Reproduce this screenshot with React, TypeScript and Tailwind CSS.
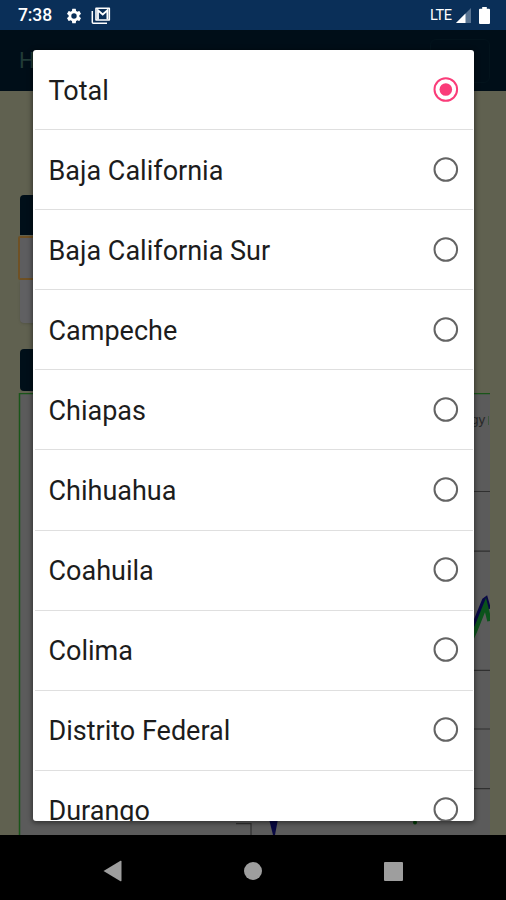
import React from "react";

const states = [
  "Total",
  "Baja California",
  "Baja California Sur",
  "Campeche",
  "Chiapas",
  "Chihuahua",
  "Coahuila",
  "Colima",
  "Distrito Federal",
  "Durango",
];

function StatusBar() {
  return (
    <div className="flex h-[30px] shrink-0 items-center bg-[#0a2f58] pl-[18px] pr-[16.5px] pt-[1px] text-white">
      <span className="w-[49px] whitespace-nowrap text-[17.5px] font-medium leading-[29px] tracking-[-0.1px]">7:38</span>
      <svg className="-ml-[2px] h-[18px] w-[18px]" viewBox="0 0 24 24" fill="#fff">
        <path d="M19.14 12.94c.04-.3.06-.61.06-.94 0-.32-.02-.64-.07-.94l2.03-1.58a.49.49 0 0 0 .12-.61l-1.92-3.32a.49.49 0 0 0-.59-.22l-2.39.96c-.5-.38-1.03-.7-1.62-.94l-.36-2.54a.48.48 0 0 0-.48-.41h-3.84a.47.47 0 0 0-.47.41l-.36 2.54c-.59.24-1.13.57-1.62.94l-2.39-.96a.48.48 0 0 0-.59.22L2.74 8.87a.48.48 0 0 0 .12.61l2.03 1.58c-.05.3-.09.63-.09.94s.02.64.07.94l-2.03 1.58a.49.49 0 0 0-.12.61l1.92 3.32c.12.22.37.29.59.22l2.39-.96c.5.38 1.03.7 1.62.94l.36 2.54c.05.24.24.41.48.41h3.84c.24 0 .44-.17.47-.41l.36-2.54c.59-.24 1.13-.56 1.62-.94l2.39.96c.22.08.47 0 .59-.22l1.92-3.32a.47.47 0 0 0-.12-.61zM12 15.6A3.6 3.6 0 1 1 12 8.4a3.6 3.6 0 0 1 0 7.2z" />
      </svg>
      <svg className="ml-[8px] h-[18px] w-[20px]" viewBox="0 0 20 18" fill="none" stroke="#fff">
        <path d="M1.3 4v11.2q0 1 1 1H16" strokeWidth="1.5" />
        <path d="M5 1.300h13.300v11.700h-13.300z" strokeWidth="1.600" strokeLinejoin="round" />
        <path d="M7 12.500V3.300l4.700 4.200L16.400 3.300v9.200" strokeWidth="1.800" />
      </svg>
      <span className="ml-auto text-[14.5px] leading-[29px] tracking-[-0.4px]">LTE</span>
      <svg className="ml-[4px] h-[15px] w-[15px]" viewBox="0 0 15 15">
        <path d="M15 0v15H0z" fill="#587391" />
        <path d="M9.500 5.500v9.500H0z" fill="#fff" />
      </svg>
      <svg className="ml-[8px] h-[17px] w-[11px]" viewBox="0 0 11 17">
        <path d="M3.2 0h4.6v1.8H10q1 0 1 1V16q0 1-1 1H1q-1 0-1-1V2.800q0-1 1-1h2.200z" fill="#fff" />
      </svg>
    </div>
  );
}

function Chart() {
  return (
    <svg className="mt-[2px] block h-[442px] w-[472px] shrink-0" viewBox="18 393 472 442">
      <rect x="19" y="393" width="471" height="442" fill="#5b5b5b" />
      <path d="M19.500 835V393.500H490" fill="none" stroke="#195519" strokeWidth="1.500" />
      <g stroke="#303030" strokeWidth="1.200">
        <path d="M250 491.500H490M250 551.200H490M250 670.300H490M250 729H490M250 788.700H490" />
        <path d="M236 823.700H251V835" fill="none" />
      </g>
      <text x="471" y="424" fontSize="13.500" fill="#292929" fontFamily="Liberation Sans, sans-serif">gy</text>
      <path d="M488.500 416v9" stroke="#3b563b" />
      <path d="M470 631L475 622L484 600L486 598.500L489 609" fill="none" stroke="#080846" strokeWidth="4" />
      <path d="M470 642L475 631L485.500 605L489.500 621" fill="none" stroke="#0b531b" strokeWidth="4.500" />
      <path d="M269 819h9l-3 16h-2z" fill="#080842" />
      <circle cx="415" cy="822.500" r="2" fill="#053d08" />
    </svg>
  );
}

function Page() {
  return (
    <div className="flex h-[805px] shrink-0 flex-col overflow-hidden bg-[#606150]">
      <div className="flex h-[61px] shrink-0 items-center justify-between bg-[#000e18] pl-[19px] pr-[16px]">
        <span className="text-[22px] leading-[58px] text-[#213b37]">H</span>
        <div className="h-[44px] w-[60px] rounded-[6px] border border-[#03131c]" />
      </div>
      <div className="mt-[104px] flex flex-col pl-[18px]">
        <div className="ml-[2px] h-[40px] w-[300px] rounded-t-[4px] bg-[#000f19]" />
        <div className="mt-[1px] h-[44px] w-[302px] rounded-[2px] border-2 border-[#6f5125] bg-[#5d5d5f]" />
        <div className="ml-[2px] h-[43px] w-[300px] rounded-b-[4px] bg-[#606062] shadow" />
        <div className="ml-[2px] mt-[26px] h-[42px] w-[300px] rounded-[4px] bg-[#000f19]" />
        <Chart />
      </div>
    </div>
  );
}

function Radio({ checked }: { checked: boolean }) {
  const color = checked ? "#fa3c79" : "#646464";
  return (
    <svg className="h-[26px] w-[26px]" viewBox="0 0 26 26">
      <circle cx="12.800" cy="12.500" r="11.300" fill="none" stroke={color} strokeWidth="2" />
      {checked && <circle cx="12.800" cy="12.500" r="6.300" fill={color} />}
    </svg>
  );
}

function StateDialog() {
  return (
    <div className="absolute left-[33px] top-[50px] h-[771px] w-[441px] overflow-hidden rounded-[3px] bg-white shadow-[0_1px_5px_1px_rgba(0,0,0,0.45)]">
      {states.map((name, i) => (
        <div key={name} className="flex h-[80.1px] flex-col px-[1.5px]">
          <div className="flex grow items-center justify-between pl-[14px] pr-[14px]">
            <span className="pt-[2px] text-[27px] leading-[32px] text-[#1c1c1c]">{name}</span>
            <Radio checked={i === 0} />
          </div>
          <div className="h-[1px] shrink-0 bg-[#dfdfdf]" />
        </div>
      ))}
    </div>
  );
}

function NavBar() {
  return (
    <div className="flex h-[65px] shrink-0 items-center justify-between bg-black pl-[103px] pr-[103px] pt-[7px]">
      <svg className="h-[22px] w-[19px]" viewBox="0 0 19 22">
        <path d="M0.500 11L17.500 0.800q1-.5 1 .6v19.200q0 1.100-1 .6z" fill="#9e9e9e" />
      </svg>
      <span className="h-[18px] w-[18px] rounded-full bg-[#9e9e9e]" />
      <span className="h-[19px] w-[19px] rounded-[1px] bg-[#9e9e9e]" />
    </div>
  );
}

export default function App() {
  return (
    <div className="relative flex h-[900px] w-[506px] flex-col overflow-hidden bg-black font-[Roboto,sans-serif]">
      <StatusBar />
      <Page />
      <NavBar />
      <StateDialog />
    </div>
  );
}
